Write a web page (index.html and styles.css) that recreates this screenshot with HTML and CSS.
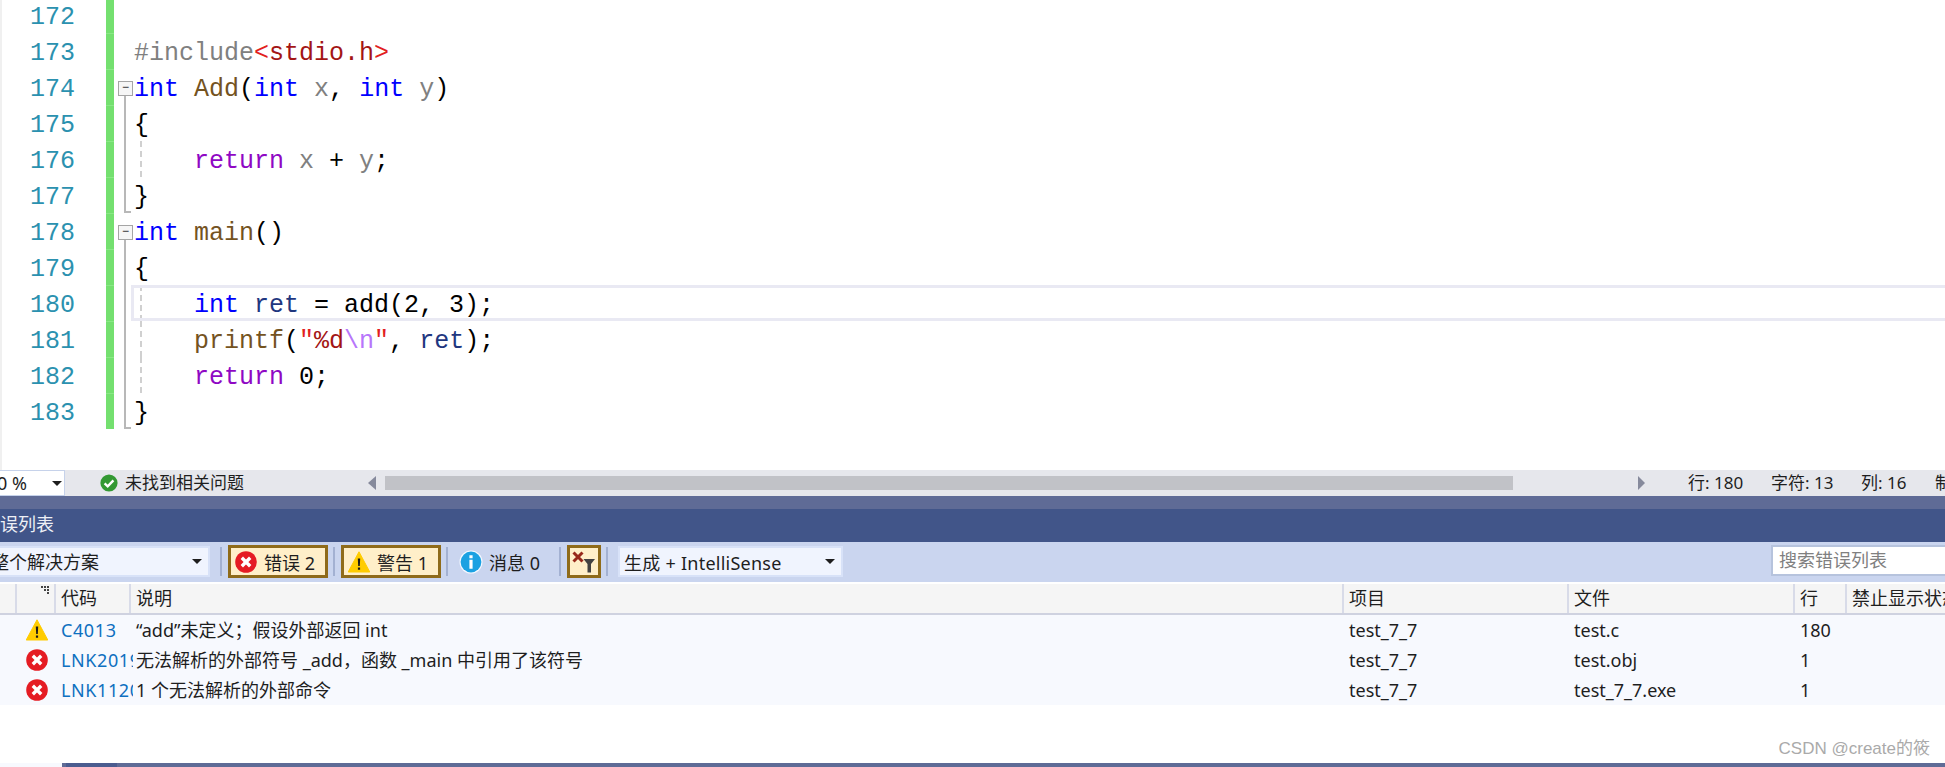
FILE: index.html
```html
<!DOCTYPE html>
<html lang="zh-CN">
<head>
<meta charset="utf-8">
<title>错误列表</title>
<link rel="stylesheet" href="styles.css">
</head>
<body>
<svg class="defs" width="0" height="0" aria-hidden="true">
  <defs>
    <symbol id="err" viewBox="0 0 22 22">
      <circle cx="11" cy="11" r="10.8" fill="#e51c23"/>
      <path d="M6.8 6.8l8.4 8.4M15.2 6.8l-8.4 8.4" stroke="#fff" stroke-width="3.4" stroke-linecap="butt" fill="none"/>
    </symbol>
    <symbol id="warn" viewBox="0 0 22 22">
      <path d="M11 .8L21.8 21H.2z" fill="#ffcc00" stroke="#ffcc00" stroke-linejoin="round"/>
      <path d="M9.8 7.5h2.4l-.4 7.5h-1.6z M9.9 16.4h2.2v2.4H9.9z" fill="#1a1a1a"/>
    </symbol>
  </defs>
</svg>

<main class="editor">
  <div class="line"><span class="num">172</span><span class="bar"></span><span class="fold"></span><span class="code"></span></div>
  <div class="line"><span class="num">173</span><span class="bar"></span><span class="fold"></span><span class="code"><span class="g">#include</span><span class="rb">&lt;</span><span class="s">stdio.h</span><span class="rb">&gt;</span></span></div>
  <div class="line"><span class="num">174</span><span class="bar"></span><span class="fold open"></span><span class="code"><span class="k">int</span> <span class="f">Add</span>(<span class="k">int</span> <span class="g">x</span>, <span class="k">int</span> <span class="g">y</span>)</span></div>
  <div class="line"><span class="num">175</span><span class="bar"></span><span class="fold mid"></span><span class="code">{</span></div>
  <div class="line"><span class="num">176</span><span class="bar"></span><span class="fold mid"></span><span class="code guide">    <span class="r">return</span> <span class="g">x</span> + <span class="g">y</span>;</span></div>
  <div class="line"><span class="num">177</span><span class="bar"></span><span class="fold end"></span><span class="code">}</span></div>
  <div class="line"><span class="num">178</span><span class="bar"></span><span class="fold open"></span><span class="code"><span class="k">int</span> <span class="f">main</span>()</span></div>
  <div class="line"><span class="num">179</span><span class="bar"></span><span class="fold mid"></span><span class="code">{</span></div>
  <div class="line"><span class="num">180</span><span class="bar"></span><span class="fold mid"></span><span class="code guide current">    <span class="k">int</span> <span class="v">ret</span> = add(2, 3);</span></div>
  <div class="line"><span class="num">181</span><span class="bar"></span><span class="fold mid"></span><span class="code guide">    <span class="f">printf</span>(<span class="s"><span class="rb">"</span>%d</span><span class="e">\n</span><span class="rb">"</span>, <span class="v">ret</span>);</span></div>
  <div class="line"><span class="num">182</span><span class="bar"></span><span class="fold mid"></span><span class="code guide">    <span class="r">return</span> 0;</span></div>
  <div class="line"><span class="num">183</span><span class="bar"></span><span class="fold end"></span><span class="code">}</span></div>
</main>

<div class="status">
  <div class="zoomlevel"><span>100 %</span><i class="caret"></i></div>
  <div class="health">
    <svg class="check" viewBox="0 0 18 18" aria-hidden="true"><circle cx="9" cy="9" r="8.6" fill="#339933"/><path d="M4.6 9.4l3.1 3 5.7-6" stroke="#fff" stroke-width="2.4" fill="none"/></svg>
    <span>未找到相关问题</span>
  </div>
  <div class="hscroll"><i class="arrow-l"></i><div class="thumb"></div><i class="arrow-r"></i></div>
  <span class="pos pos-line">行: 180</span>
  <span class="pos pos-char">字符: 13</span>
  <span class="pos pos-col">列: 16</span>
  <span class="pos">制</span>
</div>

<div class="band"></div>
<div class="title"><span>错误列表</span></div>

<div class="toolbar">
  <div class="combo scope"><span>整个解决方案</span><i class="caret"></i></div>
  <i class="sep sep-a"></i>
  <div class="toggle"><svg class="ti" aria-hidden="true"><use href="#err"/></svg><span>错误 2</span></div>
  <i class="sep"></i>
  <div class="toggle"><svg class="ti" aria-hidden="true"><use href="#warn"/></svg><span>警告 1</span></div>
  <i class="sep"></i>
  <div class="plain">
    <svg class="info" viewBox="0 0 24 24" aria-hidden="true"><circle cx="12" cy="12" r="11.5" fill="#f4f8ff"/><circle cx="12" cy="12" r="10.4" fill="#1ba1e2"/><path d="M10.4 5.2h3.2v3h-3.2z M10.4 9.8h3.2v9h-3.2z" fill="#fff"/></svg>
    <span>消息 0</span>
  </div>
  <i class="sep"></i>
  <div class="toggle filter">
    <svg viewBox="0 0 28 28" width="28" height="28" aria-hidden="true"><path d="M3.5 4.5l9 9M12.5 4.5l-9 9" stroke="#97281a" stroke-width="3" fill="none"/><path d="M13.5 11h11.5l-4 5v8.5h-3.5V16z" fill="#424242"/></svg>
  </div>
  <i class="sep"></i>
  <div class="combo source"><span>生成 + IntelliSense</span><i class="caret"></i></div>
  <div class="search">搜索错误列表</div>
</div>

<section class="list">
  <div class="head">
    <span class="hc"></span>
    <span class="hc"><svg class="grip" viewBox="0 0 10 10" aria-hidden="true"><path d="M0 0h2v2H0z M3 0h2v2H3z M6 0h2v2H6z M6 3h2v2H6z M3 3h2v2H3z M6 6h2v2H6z" fill="#444"/></svg></span>
    <span class="hc">代码</span>
    <span class="hc">说明</span>
    <span class="hc">项目</span>
    <span class="hc">文件</span>
    <span class="hc">行</span>
    <span class="hc">禁止显示状态</span>
  </div>
  <div class="row">
    <span></span>
    <span class="ic"><svg aria-hidden="true"><use href="#warn"/></svg></span>
    <span class="id">C4013</span>
    <span class="desc">“add”未定义；假设外部返回 int</span>
    <span class="cell">test_7_7</span>
    <span class="cell">test.c</span>
    <span class="cell">180</span>
    <span></span>
  </div>
  <div class="row">
    <span></span>
    <span class="ic"><svg aria-hidden="true"><use href="#err"/></svg></span>
    <span class="id">LNK2019</span>
    <span class="desc">无法解析的外部符号 _add，函数 _main 中引用了该符号</span>
    <span class="cell">test_7_7</span>
    <span class="cell">test.obj</span>
    <span class="cell">1</span>
    <span></span>
  </div>
  <div class="row">
    <span></span>
    <span class="ic"><svg aria-hidden="true"><use href="#err"/></svg></span>
    <span class="id">LNK1120</span>
    <span class="desc">1 个无法解析的外部命令</span>
    <span class="cell">test_7_7</span>
    <span class="cell">test_7_7.exe</span>
    <span class="cell">1</span>
    <span></span>
  </div>
</section>

<footer class="blank"><span class="mark">CSDN @create的筱</span></footer>
<div class="tabs"><i class="tab-gap"></i><i class="tab-edge"></i><i class="tab-active"></i><i class="tab-rest"></i></div>
</body>
</html>
```
FILE: styles.css
```css
* { box-sizing: border-box; }
html, body { margin: 0; padding: 0; width: 1945px; height: 767px; overflow: hidden; background: #fff; }
body { font-family: "Noto Sans", "Noto Sans CJK SC", sans-serif; font-size: 18px; color: #1e1e1e; display: flex; flex-direction: column; }
i { display: block; font-style: normal; }
.defs { position: absolute; }

/* editor */
.editor { height: 470px; flex: none; overflow: hidden; border-left: 2px solid #f0f0f0; }
.line { display: flex; height: 36px; }
.line:first-child { margin-top: -3px; }
.num { width: 73px; padding-top: 3px; text-align: right; color: #2b91af; font: 25px/36px "Liberation Mono", monospace; }
.bar { width: 8px; margin-left: 31px; background: #74e06f; border-top: 1px solid #8ae886; }
.fold { width: 20px; position: relative; flex: none; }
.code { flex: 1; position: relative; padding-top: 3px; white-space: pre; font: 25px/36px "Liberation Mono", monospace; color: #000; }
.fold.mid::before, .fold.end::before, .fold.open::before { content: ""; position: absolute; left: 10px; top: 0; bottom: 0; width: 2px; background: #b8b8b8; }
.fold.open::before { top: 25px; }
.fold.open::after { content: "\2212"; position: absolute; left: 4px; top: 12px; width: 13px; height: 13px; border: 1px solid #a5a5a5; background: #f6f6f6; color: #222; font: 12px/11px "Liberation Sans", sans-serif; text-align: center; }
.fold.end::after { content: ""; position: absolute; left: 10px; bottom: 0; width: 7px; height: 2px; background: #b8b8b8; }
.guide::before { content: ""; position: absolute; left: 6px; top: 0; bottom: 0; border-left: 2px dashed #d0d0d0; }
.current::after { content: ""; position: absolute; left: -3px; right: 0; top: 0; bottom: 0; border: 3px solid #e9e9f3; border-right: 0; }
.g { color: #808080; }
.rb { color: #e21f1f; }
.s { color: #a31515; }
.k { color: #0000ff; }
.f { color: #74531f; }
.r { color: #8f08c4; }
.v { color: #1f377f; }
.e { color: #b776fb; }

/* status bar */
.status { height: 26px; flex: none; font-size: 17px; background: #e6e7ec; display: grid; grid-template-columns: 65px 303px 1320px 83px 90px 74px 1fr; align-items: center; line-height: 26px; overflow: hidden; }
.zoomlevel { height: 26px; font-size: 18px; background: #fff; border: 1px solid #c6d2ea; border-left: 0; display: flex; align-items: center; justify-content: flex-end; padding-right: 2px; gap: 25px; white-space: nowrap; overflow: hidden; }
.caret { flex: none; width: 0; height: 0; border-left: 5px solid transparent; border-right: 5px solid transparent; border-top: 5px solid #1e1e1e; }
.health { display: flex; align-items: center; padding-left: 35px; gap: 7px; white-space: nowrap; }
.check { width: 18px; height: 18px; flex: none; }
.hscroll { display: flex; align-items: center; }
.arrow-l, .arrow-r { width: 0; height: 0; border-top: 7px solid transparent; border-bottom: 7px solid transparent; }
.arrow-l { border-right: 8px solid #868a9c; }
.arrow-r { border-left: 7px solid #868a9c; margin-left: 125px; }
.thumb { width: 1128px; height: 14px; margin-left: 9px; background: #c1c2c7; }
.pos { white-space: nowrap; }

/* title */
.band { height: 13px; flex: none; background: #5f6b96; }
.title { height: 33px; flex: none; background: #415589; color: #eef0f6; line-height: 31px; overflow: hidden; white-space: nowrap; }
.title span { display: block; margin-left: -18px; }

/* toolbar */
.toolbar { height: 40px; flex: none; background: #cad5ef; display: flex; align-items: center; padding: 3px 0 4px; }
.combo { height: 31px; background: #f0f4fe; border: 2px solid #d8e2f8; display: flex; align-items: center; justify-content: space-between; white-space: nowrap; overflow: hidden; }
.scope { width: 210px; border-left: 0; padding-right: 6px; }
.scope span { margin-left: -9px; margin-top: -1px; }
.source { width: 225px; margin-left: 4px; padding: 0 6px 0 4px; letter-spacing: .25px; }
.sep { width: 2px; height: 29px; background: #a3b1d2; margin-left: 5px; margin-right: 6px; }
.sep-a { margin-left: 10px; }
.toggle { width: 100px; height: 33px; background: #ffefc9; border: 3px solid #8f6b1a; display: flex; align-items: center; gap: 7px; padding-left: 4px; white-space: nowrap; }
.ti { width: 22px; height: 22px; flex: none; }
.plain { width: 111px; margin-left: -6px; margin-right: -5px; padding-left: 11px; display: flex; align-items: center; gap: 6px; white-space: nowrap; }
.info { width: 24px; height: 24px; flex: none; }
.filter { width: 34px; padding: 0; gap: 0; justify-content: center; }
.search { width: 174px; height: 31px; margin-left: auto; align-self: flex-start; background: #fff; border: 2px solid #b6c3dd; border-right: 0; color: #808080; padding-left: 6px; line-height: 27px; white-space: nowrap; }

/* list */
.list { flex: none; padding-top: 2px; }
.head, .row { display: grid; }
.head { height: 31px; grid-template-columns: 15px 39px 75px 1213px 225px 226px 52px 100px; background: #f5f5f5; border-bottom: 2px solid #cfd2e0; line-height: 29px; overflow: hidden; }
.hc { border-left: 2px solid #d8dbe8; padding-left: 5px; white-space: nowrap; overflow: hidden; position: relative; }
.hc:first-child { border-left: 0; }
.grip { position: absolute; left: 24px; top: 2px; width: 10px; height: 10px; }
.row { height: 30px; grid-template-columns: 15px 39px 79px 1209px 225px 226px 52px 100px; background: #f7f9fe; line-height: 30px; }
.row span { white-space: nowrap; overflow: hidden; }
.ic { display: flex; align-items: center; justify-content: center; padding-left: 4px; }
.ic svg { width: 22px; height: 22px; }
.id { color: #0e70c0; padding-left: 7px; letter-spacing: .6px; }
.desc { padding-left: 3px; }
.cell { padding-left: 7px; }

/* bottom */
.blank { height: 58px; flex: none; display: flex; justify-content: flex-end; align-items: flex-end; padding-right: 15px; }
.mark { font: 17px/28px "Liberation Sans", "Noto Sans CJK SC", sans-serif; color: #aaa; white-space: nowrap; }
.tabs { height: 4px; flex: none; display: flex; background: #f7f9fe; }
.tab-gap { width: 62px; }
.tab-edge { width: 4px; background: #5f6b96; }
.tab-active { width: 51px; background: #4b5c8f; }
.tab-rest { flex: 1; background: #5f6b96; }
```
